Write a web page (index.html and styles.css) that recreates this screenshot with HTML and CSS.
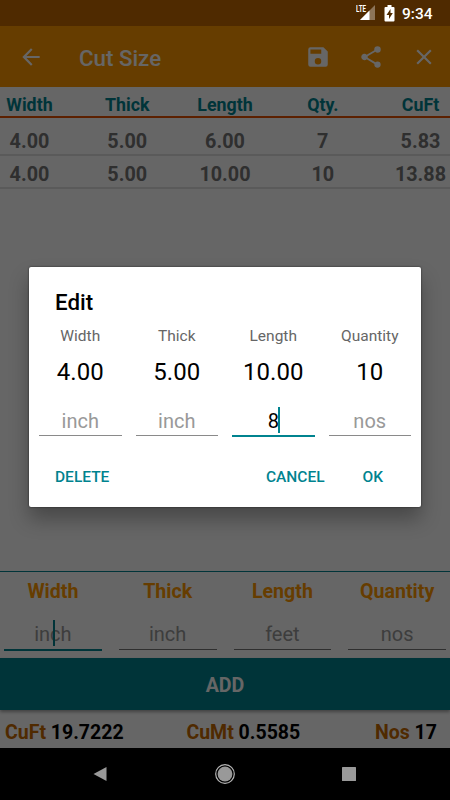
FILE: index.html
```html
<!DOCTYPE html>
<html lang="en">
<head>
  <meta charset="UTF-8">
  <meta name="viewport" content="width=device-width, initial-scale=1.0">
  <title>Cut Size</title>
  <link rel="stylesheet" href="styles.css">
</head>
<body>
  <div class="screen">
    <div class="status-bar">
      <div class="status-icons">
        <svg class="signal" width="20" height="18" viewBox="0 0 20 18">
          <path d="M19 1v15H4z" fill="#fff" opacity="0.35"/>
          <path d="M13.5 6.5V16H4z" fill="#fff"/>
          <text class="lte" x="0" y="8" textLength="10" lengthAdjust="spacingAndGlyphs">LTE</text>
        </svg>
        <svg class="battery" width="11" height="17" viewBox="0 0 11 17">
          <path d="M3.5 0h4v2h2q1 0 1 1v12.5q0 1-1 1h-8q-1 0-1-1V3q0-1 1-1h2z" fill="#fff"/>
          <path d="M6.5 4L2.5 10H5v4l3.8-6H6.5z" fill="#4f2a00"/>
        </svg>
        <span class="clock">9:34</span>
      </div>
    </div>
    <div class="app-bar">
      <svg class="back" width="26" height="26" viewBox="0 0 24 24"><path d="M20 11H7.8l5.6-5.6L12 4l-8 8 8 8 1.4-1.4L7.8 13H20z"/></svg>
      <h1>Cut Size</h1>
      <div class="actions">
        <svg width="26" height="26" viewBox="0 0 24 24"><path d="M17 3H5a2 2 0 0 0-2 2v14a2 2 0 0 0 2 2h14a2 2 0 0 0 2-2V7zm-5 16a3 3 0 1 1 0-6 3 3 0 0 1 0 6zm3-10H5V5h10z"/></svg>
        <svg width="26" height="26" viewBox="0 0 24 24"><path d="M18 16.08c-.76 0-1.44.3-1.96.77L8.91 12.7c.05-.23.09-.46.09-.7s-.04-.47-.09-.7l7.05-4.11c.54.5 1.25.81 2.04.81a3 3 0 1 0-3-3c0 .24.04.47.09.7L8.04 9.81A3 3 0 1 0 6 15c.79 0 1.5-.31 2.04-.81l7.12 4.16c-.05.21-.08.43-.08.65A2.92 2.92 0 1 0 18 16.08z"/></svg>
        <svg width="26" height="26" viewBox="0 0 24 24"><path d="M19 6.4L17.6 5 12 10.6 6.4 5 5 6.4 10.6 12 5 17.6 6.4 19 12 13.4 17.6 19 19 17.6 13.4 12z"/></svg>
      </div>
    </div>

    <div class="list">
      <div class="row head"><span>Width</span><span>Thick</span><span>Length</span><span>Qty.</span><span>CuFt</span></div>
      <div class="row"><span>4.00</span><span>5.00</span><span>6.00</span><span>7</span><span>5.83</span></div>
      <div class="row"><span>4.00</span><span>5.00</span><span>10.00</span><span>10</span><span>13.88</span></div>
    </div>

    <div class="entry">
      <div class="field"><label>Width</label><div class="input focus">inch<i class="caret"></i></div></div>
      <div class="field"><label>Thick</label><div class="input">inch</div></div>
      <div class="field"><label>Length</label><div class="input">feet</div></div>
      <div class="field"><label>Quantity</label><div class="input">nos</div></div>
    </div>
    <div class="add-btn">ADD</div>
    <div class="totals">
      <div><b>CuFt</b> 19.7222</div>
      <div class="cumt"><b>CuMt</b> 0.5585</div>
      <div><b>Nos</b> 17</div>
    </div>

    <div class="nav-bar">
      <svg width="16" height="16" viewBox="0 0 16 16"><path d="M13.5 1v14L0.5 8z" stroke-linejoin="round"/></svg>
      <svg width="22" height="22" viewBox="0 0 22 22"><circle cx="11" cy="11" r="7.4"/><circle class="ring" cx="11" cy="11" r="9.3"/></svg>
      <svg width="16" height="16" viewBox="0 0 16 16"><rect x="1" y="1" width="14" height="14" rx="0.5"/></svg>
    </div>

    <div class="scrim">
      <div class="dialog">
        <h2>Edit</h2>
        <div class="edit-cols">
          <div class="edit-col"><label>Width</label><span class="old">4.00</span><div class="input">inch</div></div>
          <div class="edit-col"><label>Thick</label><span class="old">5.00</span><div class="input">inch</div></div>
          <div class="edit-col"><label>Length</label><span class="old">10.00</span><div class="input focus filled">8<i class="caret"></i></div></div>
          <div class="edit-col"><label>Quantity</label><span class="old">10</span><div class="input">nos</div></div>
        </div>
        <div class="buttons">
          <span class="delete">DELETE</span>
          <span>CANCEL</span>
          <span>OK</span>
        </div>
      </div>
    </div>
  </div>
</body>
</html>
```
FILE: styles.css
```css
* {
  box-sizing: border-box;
}
body {
  margin: 0;
  font-family: Roboto, sans-serif;
  background: #000;
}
.screen {
  position: relative;
  width: 450px;
  height: 800px;
  display: flex;
  flex-direction: column;
  background: #fff;
  overflow: hidden;
}
.status-bar {
  height: 26px;
  background: #c66900;
}
.status-icons {
  position: relative;
  z-index: 3;
  height: 26px;
  display: flex;
  align-items: center;
  justify-content: flex-end;
  padding: 1px 17px 0 0;
  color: #fff;
}
.signal {
  margin: 0 8px 1px 0;
}
.lte {
  font-size: 9px;
  font-weight: 700;
  fill: #fff;
}
.battery {
  margin: 0 7px 1px 0;
}
.clock {
  font-size: 15.5px;
  font-weight: 500;
  line-height: 26px;
  width: 31px;
}
.app-bar {
  height: 61px;
  background: #ff9800;
  display: flex;
  align-items: center;
  padding: 0 13px 0 18px;
  color: #fff;
}
.app-bar svg {
  fill: #fff;
}
.app-bar h1 {
  margin: 2px 0 0 35px;
  font-size: 22.3px;
  font-weight: 500;
}
.actions {
  margin-left: auto;
  display: flex;
  gap: 27px;
}
.list {
  flex: 1;
}
.row {
  display: flex;
  justify-content: space-between;
  height: 33px;
  padding-top: 5px;
  border-bottom: 2px solid #e0e0e0;
  font-size: 19.8px;
  line-height: 27px;
  font-weight: 700;
  color: #757575;
}
.row span {
  width: 59px;
  display: flex;
  justify-content: center;
}
.row.head {
  height: 31px;
  padding-top: 5px;
  margin-bottom: 5px;
  border-bottom: 2px solid #e65100;
  font-size: 17.8px;
  line-height: 26px;
  color: #00838f;
}
.entry {
  height: 87px;
  border-top: 1px solid #00838f;
  display: flex;
  gap: 17px;
  padding: 8px 4px 0;
}
.field {
  flex: 1;
  text-align: center;
}
.field label {
  display: block;
  font-size: 19.6px;
  line-height: 24px;
  font-weight: 700;
  color: #ff9800;
}
.input {
  position: relative;
  font-size: 20px;
  line-height: 24px;
  color: #999;
  border-bottom: 1px solid #8a8a8a;
}
.field .input {
  margin-top: 18px;
  height: 28px;
  border-color: #757575;
}
.input.focus,
.field .input.focus {
  border-bottom: 2px solid #00838f;
}
.field .input.focus {
  height: 29px;
}
.caret {
  position: absolute;
  left: 50%;
  top: -2px;
  width: 2px;
  height: 26px;
  background: #00838f;
}
.add-btn {
  height: 52px;
  background: #00838f;
  box-shadow: 0 2px 3px rgba(0,0,0,0.35);
  color: #fff;
  text-align: center;
  font-size: 19.6px;
  line-height: 56px;
  font-weight: 700;
  z-index: 1;
}
.totals {
  height: 38px;
  display: flex;
  justify-content: space-between;
  padding: 5px 13px 0 5px;
  font-size: 19.5px;
  line-height: 36px;
  font-weight: 700;
  color: #000;
}
.totals b {
  font-weight: 700;
  color: #c66900;
}
.cumt {
  margin-right: 12px;
}
.nav-bar {
  height: 52px;
  background: #000;
  display: flex;
  align-items: center;
  justify-content: center;
  gap: 105px;
}
.nav-bar svg {
  fill: #999;
}
.nav-bar .ring {
  fill: none;
  stroke: #b5b5b5;
  stroke-width: 1.2;
}

/* dialog */
.scrim {
  position: absolute;
  z-index: 2;
  top: 0;
  left: 0;
  width: 450px;
  height: 748px;
  background: rgba(0,0,0,0.6);
  display: flex;
  align-items: center;
  justify-content: center;
  padding-top: 26px;
}
.dialog {
  width: 392px;
  height: 240px;
  background: #fff;
  border-radius: 2px;
  box-shadow: 0 0 2px rgba(0,0,0,0.7), 0 12px 20px rgba(0,0,0,0.3);
}
.dialog h2 {
  margin: 0;
  padding: 21px 0 0 26px;
  font-size: 22.3px;
  line-height: 29px;
  font-weight: 500;
  color: #000;
}
.edit-cols {
  display: flex;
  gap: 14px;
  padding: 9px 10px 0;
}
.edit-col {
  flex: 1;
  text-align: center;
}
.edit-col label {
  display: block;
  font-size: 15.5px;
  line-height: 20px;
  color: #666;
}
.old {
  display: block;
  margin-top: 12px;
  font-size: 24px;
  line-height: 28px;
  color: #000;
}
.edit-col .input {
  height: 27px;
  margin-top: 23px;
}
.edit-col .input.focus {
  height: 28px;
}
.edit-col .input.filled {
  color: #000;
}
.edit-col .caret {
  left: 46px;
  top: -2px;
}
.buttons {
  display: flex;
  justify-content: flex-end;
  gap: 38px;
  padding: 30px 38px 0 26px;
  font-size: 15.5px;
  line-height: 20px;
  font-weight: 500;
  color: #00838f;
}
.buttons .delete {
  margin-right: auto;
}
```
